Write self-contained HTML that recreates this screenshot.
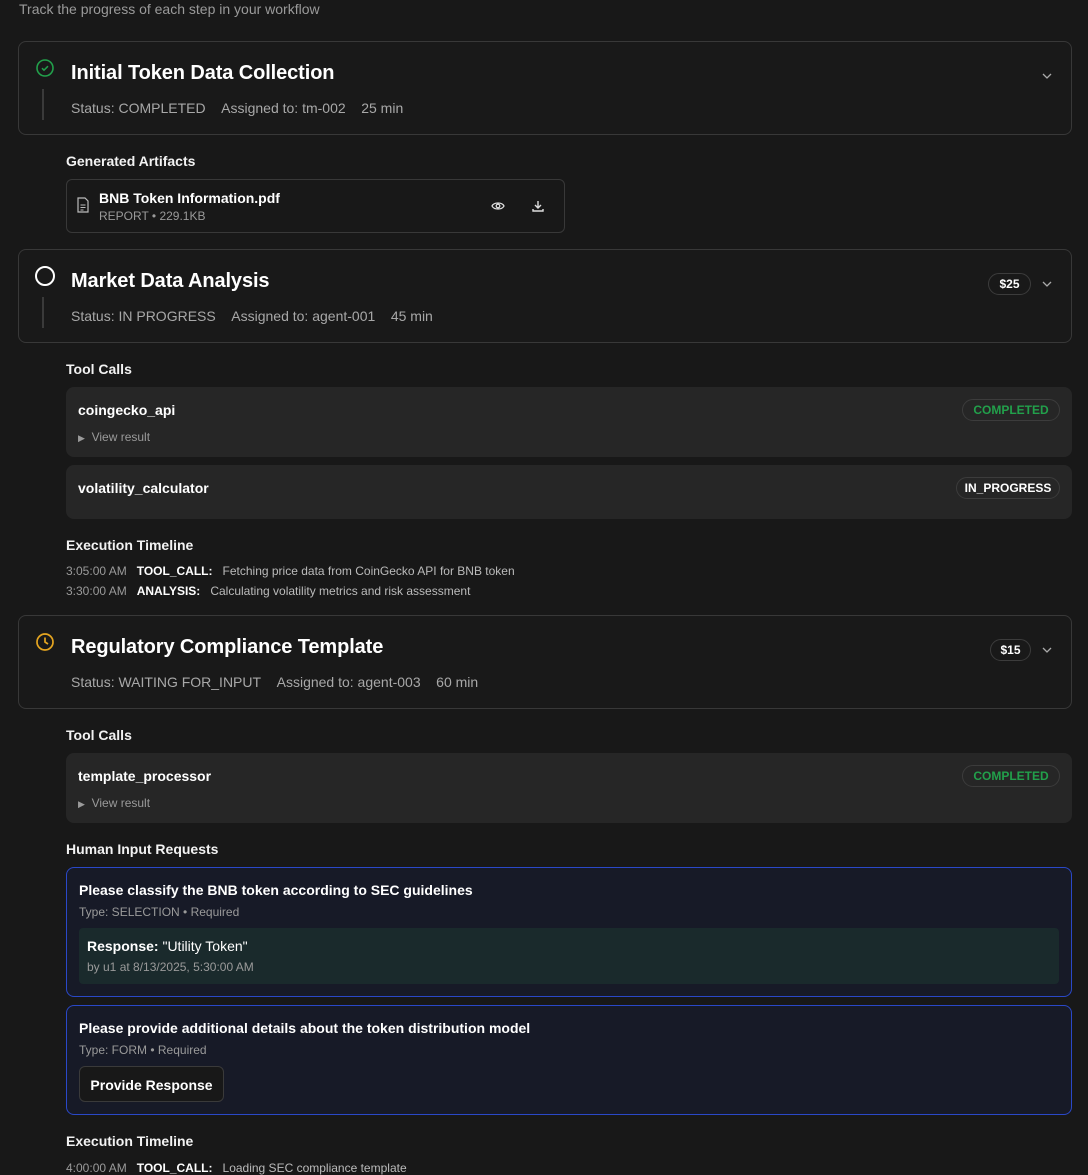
<!DOCTYPE html>
<html><head><meta charset="utf-8"><style>
*{box-sizing:border-box;margin:0;padding:0}
html,body{width:1088px;height:1165px;overflow:hidden;background:#181818;font-family:"Liberation Sans",sans-serif;color:#fff}
.a{position:absolute;white-space:nowrap}
.t{position:absolute;white-space:nowrap;margin-top:1px}
.card{position:absolute;left:18px;width:1054px;height:94px;border:1px solid #383838;border-radius:8px;background:#191919}
.title{font-size:20px;font-weight:bold;letter-spacing:-0.1px;margin-top:2px}
.meta{font-size:14px;color:#a8a8a8}
.h{font-size:14px;font-weight:bold;color:#f2f2f2}
.tc{position:absolute;left:66px;width:1006px;background:#262626;border-radius:8px}
.badge{position:absolute;border:1px solid #3c3c3c;border-radius:12px;font-size:12px;font-weight:bold;text-align:center;line-height:20px;height:22px}
.vline{position:absolute;left:42px;width:2px;background:#3a3a3a}
.small{font-size:12px;color:#9a9a9a}
.hi{position:absolute;left:66px;width:1006px;border:1px solid #2a48c8;border-radius:8px;background:#171a27}
</style></head><body>
<div class="t" style="left:19px;top:0px;font-size:14px;color:#9a9a9a">Track the progress of each step in your workflow</div>

<div class="card" style="top:41px"></div>
<svg class="a" style="left:35px;top:58px" width="20" height="20" viewBox="0 0 20 20"><circle cx="10" cy="10" r="8" fill="none" stroke="#22a04b" stroke-width="1.6"/><path d="M7 10.2l2 2 4-4" fill="none" stroke="#22a04b" stroke-width="1.5"/></svg>
<div class="vline" style="top:89px;height:31px"></div>
<div class="t title" style="left:71px;top:60px">Initial Token Data Collection</div>
<div class="t meta" style="left:71px;top:99px">Status: COMPLETED&nbsp;&nbsp;&nbsp;&nbsp;Assigned to: tm-002&nbsp;&nbsp;&nbsp;&nbsp;25 min</div>
<svg class="a" style="left:1041px;top:70px" width="12" height="12" viewBox="0 0 12 12"><path d="M2 4l4 4 4-4" fill="none" stroke="#aaa" stroke-width="1.3"/></svg>

<div class="t h" style="left:66px;top:152px">Generated Artifacts</div>
<div class="a" style="left:66px;top:179px;width:499px;height:54px;border:1px solid #383838;border-radius:6px"></div>
<svg class="a" style="left:76px;top:197px" width="14" height="16" viewBox="0 0 14 16"><path d="M2 1h7l3 3v11H2z" fill="none" stroke="#bbb" stroke-width="1.2"/><path d="M4.5 8h5M4.5 10.5h5M4.5 13h3" stroke="#bbb" stroke-width="1"/></svg>
<div class="t" style="left:99px;top:189px;font-size:14px;font-weight:bold">BNB Token Information.pdf</div>
<div class="t small" style="left:99px;top:208px">REPORT • 229.1KB</div>
<svg class="a" style="left:491px;top:200px" width="14" height="12" viewBox="0 0 14 12"><path d="M1 6c2-4 10-4 12 0c-2 4-10 4-12 0z" fill="none" stroke="#ddd" stroke-width="1.3"/><circle cx="7" cy="6" r="1.8" fill="none" stroke="#ddd" stroke-width="1.3"/></svg>
<svg class="a" style="left:531px;top:199px" width="14" height="14" viewBox="0 0 14 14"><path d="M7 2v7M4 6l3 3 3-3M2 10v2h10v-2" fill="none" stroke="#ddd" stroke-width="1.4"/></svg>

<div class="card" style="top:249px"></div>
<svg class="a" style="left:34px;top:265px" width="22" height="22" viewBox="0 0 22 22"><circle cx="11" cy="11" r="9" fill="none" stroke="#fff" stroke-width="2"/></svg>
<div class="vline" style="top:297px;height:31px"></div>
<div class="t title" style="left:71px;top:268px">Market Data Analysis</div>
<div class="t meta" style="left:71px;top:307px">Status: IN PROGRESS&nbsp;&nbsp;&nbsp;&nbsp;Assigned to: agent-001&nbsp;&nbsp;&nbsp;&nbsp;45 min</div>
<div class="badge" style="left:988px;top:273px;width:43px">$25</div>
<svg class="a" style="left:1041px;top:278px" width="12" height="12" viewBox="0 0 12 12"><path d="M2 4l4 4 4-4" fill="none" stroke="#aaa" stroke-width="1.3"/></svg>

<div class="t h" style="left:66px;top:360px">Tool Calls</div>
<div class="tc" style="top:387px;height:70px"></div>
<div class="t" style="left:78px;top:401px;font-size:14px;font-weight:bold">coingecko_api</div>
<div class="t small" style="left:78px;top:429px"><span style="font-size:9px">▶</span>&nbsp; View result</div>
<div class="badge" style="left:962px;top:399px;width:98px;color:#22a04b">COMPLETED</div>
<div class="tc" style="top:465px;height:54px"></div>
<div class="t" style="left:78px;top:479px;font-size:14px;font-weight:bold">volatility_calculator</div>
<div class="badge" style="left:956px;top:477px;width:104px">IN_PROGRESS</div>

<div class="t h" style="left:66px;top:536px">Execution Timeline</div>
<div class="t small" style="left:66px;top:563px">3:05:00 AM&nbsp;&nbsp;&nbsp;<b style="color:#fff">TOOL_CALL:</b>&nbsp;&nbsp;&nbsp;<span style="color:#bbb">Fetching price data from CoinGecko API for BNB token</span></div>
<div class="t small" style="left:66px;top:583px">3:30:00 AM&nbsp;&nbsp;&nbsp;<b style="color:#fff">ANALYSIS:</b>&nbsp;&nbsp;&nbsp;<span style="color:#bbb">Calculating volatility metrics and risk assessment</span></div>

<div class="card" style="top:615px"></div>
<svg class="a" style="left:35px;top:632px" width="20" height="20" viewBox="0 0 20 20"><circle cx="10" cy="10" r="8" fill="none" stroke="#e5a520" stroke-width="1.7"/><path d="M10 5.5V10l3 2" fill="none" stroke="#e5a520" stroke-width="1.7"/></svg>
<div class="t title" style="left:71px;top:634px">Regulatory Compliance Template</div>
<div class="t meta" style="left:71px;top:673px">Status: WAITING FOR_INPUT&nbsp;&nbsp;&nbsp;&nbsp;Assigned to: agent-003&nbsp;&nbsp;&nbsp;&nbsp;60 min</div>
<div class="badge" style="left:990px;top:639px;width:41px">$15</div>
<svg class="a" style="left:1041px;top:644px" width="12" height="12" viewBox="0 0 12 12"><path d="M2 4l4 4 4-4" fill="none" stroke="#aaa" stroke-width="1.3"/></svg>

<div class="t h" style="left:66px;top:726px">Tool Calls</div>
<div class="tc" style="top:753px;height:70px"></div>
<div class="t" style="left:78px;top:767px;font-size:14px;font-weight:bold">template_processor</div>
<div class="t small" style="left:78px;top:795px"><span style="font-size:9px">▶</span>&nbsp; View result</div>
<div class="badge" style="left:962px;top:765px;width:98px;color:#22a04b">COMPLETED</div>

<div class="t h" style="left:66px;top:840px">Human Input Requests</div>
<div class="hi" style="top:867px;height:130px"></div>
<div class="t" style="left:79px;top:881px;font-size:14px;font-weight:bold">Please classify the BNB token according to SEC guidelines</div>
<div class="t small" style="left:79px;top:904px">Type: SELECTION • Required</div>
<div class="a" style="left:79px;top:928px;width:980px;height:56px;background:#1a2a2c;border-radius:4px"></div>
<div class="t" style="left:87px;top:937px;font-size:14px"><b>Response:</b> "Utility Token"</div>
<div class="t small" style="left:87px;top:959px">by u1 at 8/13/2025, 5:30:00 AM</div>

<div class="hi" style="top:1005px;height:110px"></div>
<div class="t" style="left:79px;top:1019px;font-size:14px;font-weight:bold">Please provide additional details about the token distribution model</div>
<div class="t small" style="left:79px;top:1042px">Type: FORM • Required</div>
<div class="a" style="left:79px;top:1066px;width:145px;height:36px;background:#181818;border:1px solid #3a3a3a;border-radius:6px;font-size:14px;font-weight:bold;text-align:center;line-height:36px">Provide Response</div>

<div class="t h" style="left:66px;top:1132px">Execution Timeline</div>
<div class="t small" style="left:66px;top:1160px">4:00:00 AM&nbsp;&nbsp;&nbsp;<b style="color:#fff">TOOL_CALL:</b>&nbsp;&nbsp;&nbsp;<span style="color:#bbb">Loading SEC compliance template</span></div>
</body></html>
